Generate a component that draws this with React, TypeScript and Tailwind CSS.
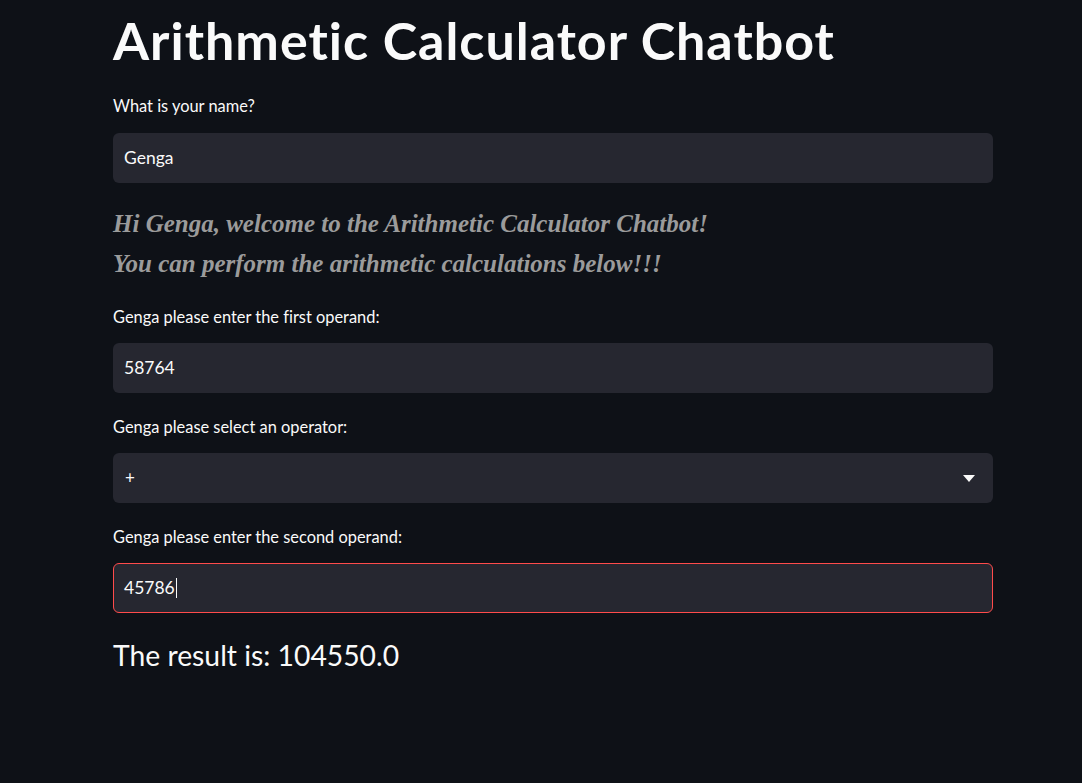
import React from "react";

const Label = ({ children, mt }: { children: React.ReactNode; mt: string }) => (
  <div className={`${mt} mb-[14px] h-[24px] leading-[24px] text-[16.4px] text-[#fafafa]`}>{children}</div>
);

export default function App() {
  return (
    <div
      className="min-h-screen w-full bg-[#0e1117] text-[#fafafa] [font-variant-ligatures:none]"
      style={{ fontFamily: "Lato, 'Open Sans', sans-serif" }}
    >
      <div className="ml-[113px] w-[880px] pb-[100px]">
        <h1 className="h-[80px] leading-[80px] text-[52px] font-bold tracking-[1px] whitespace-nowrap">Arithmetic Calculator Chatbot</h1>

        <div className="mt-[14px] mb-[15px] h-[24px] leading-[24px] text-[16.4px]">What is your name?</div>
        <div className="flex h-[50px] items-center rounded-[6px] bg-[#262730] pl-[11px] text-[17.5px]">Genga</div>

        <div
          className="mt-[21px] text-[25px] font-bold italic leading-[40px] text-[#9b9b9b]"
          style={{ fontFamily: "'Liberation Serif', 'Times New Roman', serif" }}
        >
          <div>Hi Genga, welcome to the Arithmetic Calculator Chatbot!</div>
          <div>You can perform the arithmetic calculations below!!!</div>
        </div>

        <Label mt="mt-[21px]">Genga please enter the first operand:</Label>
        <div className="flex h-[50px] items-center rounded-[6px] bg-[#262730] pl-[11px] text-[17.5px]">58764</div>

        <Label mt="mt-[22px]">Genga please select an operator:</Label>
        <div className="flex h-[50px] items-center justify-between rounded-[6px] bg-[#262730] pl-[12px] pr-[18px] text-[17px]">
          <span>+</span>
          <svg width="12" height="7" viewBox="0 0 12 7">
            <path d="M0 0 L12 0 L6 7 Z" fill="#fafafa" />
          </svg>
        </div>

        <Label mt="mt-[22px]">Genga please enter the second operand:</Label>
        <div className="flex h-[50px] items-center rounded-[6px] border border-[#ff4b4b] bg-[#262730] pl-[10px] text-[17.5px]">
          <span>45786</span>
          <span className="ml-[1px] inline-block h-[20px] w-px bg-[#fafafa]" />
        </div>

        <div className="mt-[22px] h-[40px] leading-[40px] text-[28.3px]">The result is: 104550.0</div>
      </div>
    </div>
  );
}
